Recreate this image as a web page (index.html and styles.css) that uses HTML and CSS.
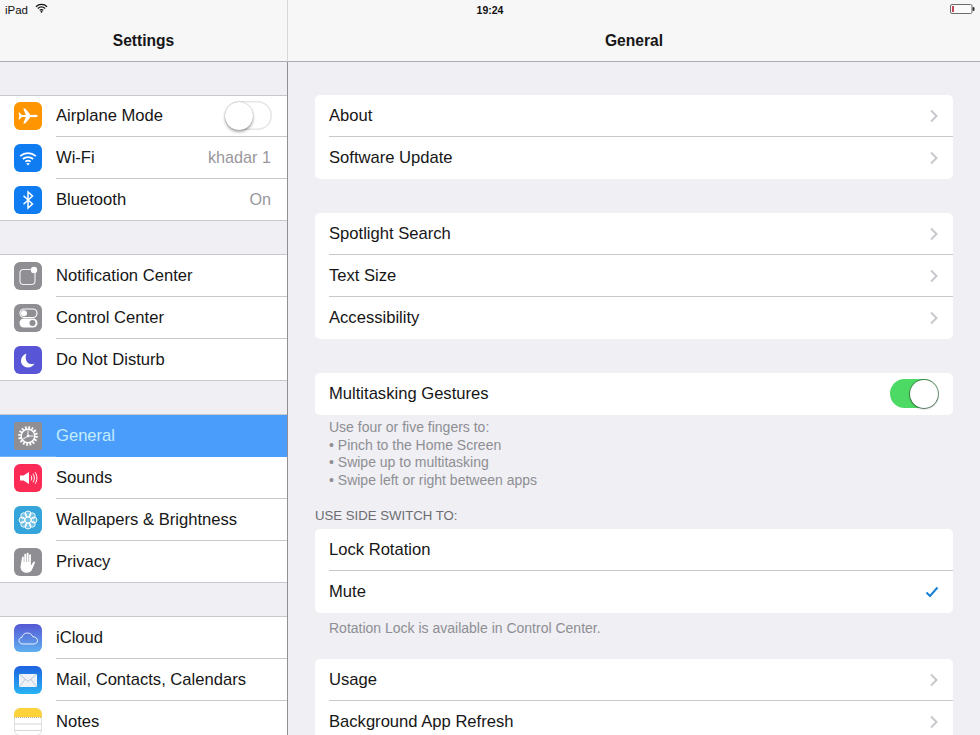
FILE: index.html
```html
<!DOCTYPE html>
<html lang="en">
<head>
<meta charset="utf-8">
<title>Settings - General</title>
<link rel="stylesheet" href="styles.css">
</head>
<body>
<svg class="defs" width="0" height="0" aria-hidden="true">
  <defs>
    <symbol id="chev" viewBox="0 0 10 14"><path d="M2 1.5 7.500 7 2 12.500" fill="none" stroke="#c7c7cc" stroke-width="2"/></symbol>
  </defs>
</svg>
<div class="app">
  <div class="status">
    <div class="status-left">
      <span>iPad</span>
      <svg class="status-wifi" viewBox="0 0 14 10"><path d="M1 3.600C4.400.4 9.600.4 13 3.600M3 5.600c2.300-2 5.700-2 8 0M5 7.500c1.200-.9 2.800-.9 4 0" fill="none" stroke="#111" stroke-width="1.300"/><circle cx="7" cy="9" r="1" fill="#111"/></svg>
    </div>
    <div class="status-time">19:24</div>
    <div class="status-right">
      <svg class="battery" viewBox="0 0 25 10"><rect x=".5" y=".5" width="21.500" height="9" rx="1.500" fill="#fbfbfb" stroke="#6f6a6b"/><rect x="2" y="2" width="2" height="6" fill="#c8455a"/><rect x="22.500" y="3" width="2" height="4" rx="1" fill="#333"/></svg>
    </div>
  </div>

  <aside class="sidebar">
    <header class="topbar">Settings</header>
    <div class="side-scroll">
      <section class="side-group side-group-first">
        <div class="side-row">
          <span class="icon icon-orange"><svg viewBox="0 0 28 28"><path d="M5.500 10.500 7.800 13.100l4-.1L9.200 6.500h2.100l5.300 6.400 4.400-.1c1.400 0 2.900.5 2.900 1.200s-1.500 1.200-2.900 1.200l-4.400-.1-5.300 6.400H9.200l2.600-6.500-4-.1-2.300 2.600-1 .1.800-3.500-.8-3.500z" fill="#fff"/></svg></span>
          <span class="side-label">Airplane Mode</span>
          <span class="toggle"><span class="knob"></span></span>
        </div>
        <div class="side-row">
          <span class="icon icon-blue"><svg viewBox="0 0 28 28"><path d="M6.200 12.200c4.600-4 11-4 15.600 0M8.800 15c3-2.600 7.400-2.600 10.400 0M11.300 17.600c1.600-1.200 3.800-1.200 5.400 0" fill="none" stroke="#fff" stroke-width="1.700"/><path d="M14 21.500l-1.800-1.900c1.100-.7 2.500-.7 3.600 0z" fill="#fff"/></svg></span>
          <span class="side-label">Wi-Fi</span>
          <span class="side-value">khadar 1</span>
        </div>
        <div class="side-row">
          <span class="icon icon-blue"><svg viewBox="0 0 28 28"><path d="M9.500 9.800 18.500 18 14 22V6l4.500 4-9 8.200" fill="none" stroke="#fff" stroke-width="1.500"/></svg></span>
          <span class="side-label">Bluetooth</span>
          <span class="side-value">On</span>
        </div>
      </section>

      <section class="side-group">
        <div class="side-row">
          <span class="icon icon-gray"><svg viewBox="0 0 28 28"><rect x="6" y="7.500" width="15" height="15" rx="3.500" fill="none" stroke="#fff" stroke-opacity=".85" stroke-width="1.200"/><circle cx="20" cy="8" r="3.200" fill="#fff"/></svg></span>
          <span class="side-label">Notification Center</span>
        </div>
        <div class="side-row">
          <span class="icon icon-gray"><svg viewBox="0 0 28 28"><rect x="6" y="5" width="17" height="8.500" rx="4.250" fill="none" stroke="#fff" stroke-width="1.200"/><circle cx="10" cy="9.250" r="3" fill="#fff"/><rect x="5.500" y="14.500" width="18" height="9" rx="4.500" fill="#fff"/><circle cx="18.500" cy="19" r="3" fill="#8e8e93"/></svg></span>
          <span class="side-label">Control Center</span>
        </div>
        <div class="side-row">
          <span class="icon icon-indigo"><svg viewBox="0 0 28 28"><path d="M12.500 7.500C9 9 7 11.600 7 14.800c0 3.900 3.100 6.700 6.800 6.700 2.900 0 5.300-1.500 6.700-4-1 .5-2.200.7-3.400.6-4.700-.4-6.700-5.800-4.600-10.600z" fill="#fff"/></svg></span>
          <span class="side-label">Do Not Disturb</span>
        </div>
      </section>

      <section class="side-group">
        <div class="side-row side-row-active">
          <span class="icon icon-gray icon-gear"><svg viewBox="0 0 28 28"><circle cx="14" cy="14" r="8.300" fill="none" stroke="#fff" stroke-width="3" stroke-dasharray="1.700 1.560"/><circle cx="14" cy="14" r="6.800" fill="none" stroke="#fff" stroke-width="1.400"/><path d="M14 14V8.500M14 14l-4.800 3M14 14h5.500" stroke="#fff" stroke-width="1"/><circle cx="14" cy="14" r="1.300" fill="#fff"/></svg></span>
          <span class="side-label">General</span>
        </div>
        <div class="side-row">
          <span class="icon icon-pink"><svg viewBox="0 0 28 28"><path d="M6 11.500h3.500L15 8v12l-5.500-3.500H6z" fill="#fff"/><path d="M17 11.500c1 1.500 1 3.500 0 5M19 9.800c1.800 2.600 1.800 5.800 0 8.400M21 8.200c2.500 3.500 2.500 8.100 0 11.600" fill="none" stroke="#fff" stroke-width="1"/></svg></span>
          <span class="side-label">Sounds</span>
        </div>
        <div class="side-row">
          <span class="icon icon-teal"><svg viewBox="0 0 28 28"><g fill="#fff" fill-opacity=".3" stroke="#fff" stroke-width=".9"><circle cx="14" cy="14" r="3"/><circle cx="14" cy="8" r="3"/><circle cx="14" cy="20" r="3"/><circle cx="8" cy="14" r="3"/><circle cx="20" cy="14" r="3"/><circle cx="9.800" cy="9.800" r="3"/><circle cx="18.200" cy="9.800" r="3"/><circle cx="9.800" cy="18.200" r="3"/><circle cx="18.200" cy="18.200" r="3"/></g></svg></span>
          <span class="side-label">Wallpapers &amp; Brightness</span>
        </div>
        <div class="side-row">
          <span class="icon icon-gray"><svg viewBox="0 0 28 28"><path d="M8 9.500c0-1.300 1.800-1.300 1.800 0V14h.5V6.800c0-1.300 1.900-1.300 1.900 0V14h.5V5.800c0-1.300 1.900-1.300 1.900 0V14h.5V7.300c0-1.300 1.800-1.300 1.800 0V17l.4.200 1.700-3c.8-1.200 2.400-.5 1.800.8l-2.500 6c-1 2.500-2.800 3.800-5.600 3.800-3.800 0-6.200-2.500-6.200-6.300z" fill="#fff"/></svg></span>
          <span class="side-label">Privacy</span>
        </div>
      </section>

      <section class="side-group">
        <div class="side-row">
          <span class="icon icon-cloud"><svg viewBox="0 0 28 28"><path d="M9 20c-2.500 0-4-1.500-4-3.400 0-1.800 1.300-3.100 3-3.300.5-2.600 2.700-4.300 5.400-4.300 2.600 0 4.600 1.500 5.300 3.700 2.700-.1 4.800 1.600 4.800 3.900 0 2.200-1.700 3.400-4 3.400z" fill="none" stroke="#fff" stroke-opacity=".85" stroke-width="1"/></svg></span>
          <span class="side-label">iCloud</span>
        </div>
        <div class="side-row">
          <span class="icon icon-mail"><svg viewBox="0 0 28 28"><rect x="5" y="8" width="18" height="13" fill="#eef2f6"/><path d="M5 8l9 7.500L23 8M5 21l6.500-8M23 21l-6.500-8" fill="none" stroke="#9db4cc" stroke-width=".7"/></svg></span>
          <span class="side-label">Mail, Contacts, Calendars</span>
        </div>
        <div class="side-row">
          <span class="icon icon-notes"><svg viewBox="0 0 28 28"><path d="M0 6a6 6 0 0 1 6-6h16a6 6 0 0 1 6 6v3H0z" fill="#fdd23a"/><path d="M0 9.500h28" stroke="#b8a878" stroke-dasharray="1 1"/><path d="M0 16h28M0 22.500h28" stroke="#d6d6d6"/></svg></span>
          <span class="side-label">Notes</span>
        </div>
      </section>
    </div>
  </aside>

  <main class="main">
    <header class="topbar">General</header>
    <div class="main-scroll">
      <section class="card">
        <div class="row"><span class="row-label">About</span><svg class="chev"><use href="#chev"/></svg></div>
        <div class="row"><span class="row-label">Software Update</span><svg class="chev"><use href="#chev"/></svg></div>
      </section>
      <section class="card card-b">
        <div class="row"><span class="row-label">Spotlight Search</span><svg class="chev"><use href="#chev"/></svg></div>
        <div class="row"><span class="row-label">Text Size</span><svg class="chev"><use href="#chev"/></svg></div>
        <div class="row"><span class="row-label">Accessibility</span><svg class="chev"><use href="#chev"/></svg></div>
      </section>
      <section class="card card-b">
        <div class="row"><span class="row-label">Multitasking Gestures</span><span class="toggle toggle-on"><span class="knob"></span></span></div>
      </section>
      <p class="note note-multi">Use four or five fingers to:<br>• Pinch to the Home Screen<br>• Swipe up to multitasking<br>• Swipe left or right between apps</p>
      <h2 class="section-title">USE SIDE SWITCH TO:</h2>
      <section class="card">
        <div class="row"><span class="row-label">Lock Rotation</span></div>
        <div class="row"><span class="row-label">Mute</span><svg class="check" viewBox="0 0 14 12"><path d="M1.500 6.500 5 10 12.500 1.500" fill="none" stroke="#1a7fd0" stroke-width="2"/></svg></div>
      </section>
      <p class="note note-single">Rotation Lock is available in Control Center.</p>
      <section class="card card-c">
        <div class="row"><span class="row-label">Usage</span><svg class="chev"><use href="#chev"/></svg></div>
        <div class="row"><span class="row-label">Background App Refresh</span><svg class="chev"><use href="#chev"/></svg></div>
      </section>
    </div>
  </main>
</div>
</body>
</html>
```
FILE: styles.css
```css
* { box-sizing: border-box; }
html, body { margin: 0; height: 735px; overflow: hidden; }
body { font-family: "Liberation Sans", Arial, sans-serif; color: #111; background: #efeff4; }
.defs { position: absolute; }
.app { position: relative; display: flex; width: 980px; height: 735px; overflow: hidden; }

.status { position: absolute; top: 0; left: 0; right: 0; height: 20px; display: grid; grid-template-columns: 1fr auto 1fr; align-items: center; padding: 0 5px; font-size: 11.500px; color: #111; }
.status-left { display: flex; align-items: center; gap: 7px; height: 20px; margin-top: -1px; }
.status-wifi { width: 13px; height: 10px; margin-top: -3px; }
.status-time { font-weight: 700; font-size: 10.500px; }
.status-right { display: flex; justify-content: flex-end; margin-top: -2px; }
.battery { width: 25px; height: 10px; }

.topbar { height: 62px; padding-top: 22px; line-height: 37px; text-align: center; font-size: 15.600px; font-weight: 700; background: #f7f7f8; border-bottom: 1px solid #acacb0; color: #161616; }

.sidebar { width: 288px; flex: none; display: flex; flex-direction: column; }
.sidebar .topbar { border-right: 1px solid #d8d8dc; }
.side-scroll { flex: 1; overflow: hidden; background: #efeff4; border-right: 1px solid #8f8f94; }
.side-group { margin-top: 34px; background: #fff; box-shadow: 0 -1px 0 #c8c7cc; }
.side-group-first { margin-top: 33px; box-shadow: inset 0 1px 0 #c8c7cc; }
.side-row { position: relative; height: 42px; display: flex; align-items: center; padding: 0 16px 1px 14px; }
.side-row::after { content: ""; position: absolute; left: 56px; right: 0; bottom: 0; height: 1px; background: #c8c7cc; }
.side-row:last-child::after { left: 0; }
.side-label { margin-left: 14px; font-size: 16.600px; flex: 1; color: #161616; }
.side-value { font-size: 16.200px; color: #98989c; }
.side-row-active { background: #4a9dfa; }
.side-row-active::after { background: #6fb3fa; right: auto; width: 56px; left: 0; }
.side-row-active .side-label { color: #c4ecff; }

.icon { flex: none; width: 28px; height: 28px; border-radius: 6px; overflow: hidden; display: block; }
.icon svg { display: block; width: 28px; height: 28px; }
.icon-orange { background: #ff9500; }
.icon-blue { background: #0f7cf2; }
.icon-gray { background: #8e8e93; }
.icon-gear { border-radius: 2px; }
.icon-indigo { background: #5856d6; }
.icon-pink { background: #fb2b56; }
.icon-teal { background: #34a4da; }
.icon-cloud { background: linear-gradient(#5658d4, #5fb0f0); }
.icon-mail { background: linear-gradient(#1d62e0, #29b4f5); }
.icon-notes { background: #fff; box-shadow: inset 0 0 0 1px #e2e2e2; }

.toggle { flex: none; position: relative; display: block; width: 47px; height: 29px; border-radius: 15px; background: #fff; box-shadow: inset 0 0 0 1.500px #e5e5ea; margin-right: -1px; }
.knob { position: absolute; left: 0; top: .5px; width: 28px; height: 28px; border-radius: 50%; background: #fff; box-shadow: 0 2px 3px rgba(0,0,0,.35), 0 0 1px rgba(0,0,0,.4); }
.toggle-on { width: 48px; background: #4cd964; box-shadow: none; margin-right: 0; }
.toggle-on .knob { left: 20px; box-shadow: 0 1px 2px rgba(0,0,0,.3), 0 0 0 1px rgba(60,110,70,.7); }

.main { flex: 1; min-width: 0; display: flex; flex-direction: column; }
.main-scroll { flex: 1; overflow: hidden; padding: 33px 27px 0; }
.card { background: #fff; border-radius: 5px; }
.card-b { margin-top: 34px; }
.card-c { margin-top: 15px; }
.row { position: relative; height: 42px; display: flex; align-items: center; justify-content: space-between; padding: 0 15px 1px 14px; }
.row:not(:last-child)::after { content: ""; position: absolute; left: 14px; right: 0; bottom: 0; height: 1px; background: #c8c7cc; }
.row-label { font-size: 16.600px; color: #161616; }
.chev { width: 10px; height: 14px; flex: none; margin-right: -1px; }
.check { width: 14px; height: 12px; flex: none; margin-right: -1px; margin-top: 1px; }
.note { margin: 0; padding-left: 14px; font-size: 14px; line-height: 17.500px; color: #8e8e93; }
.note-multi { padding-top: 4px; }
.note-single { padding-top: 7px; height: 31px; }
.section-title { margin: 19px 0 0; padding-bottom: 6px; font-size: 13.200px; line-height: 15px; font-weight: 400; color: #6d6d72; }
```
